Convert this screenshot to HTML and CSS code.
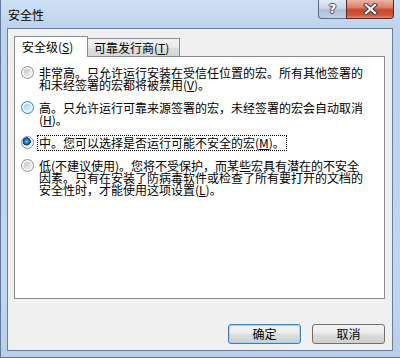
FILE: index.html
```html
<!DOCTYPE html>
<html lang="zh-CN">
<head>
<meta charset="utf-8">
<title>安全性</title>
<link rel="stylesheet" href="styles.css">
</head>
<body>
<div class="window">
  <div class="titlebar">
    <span class="title">安全性</span>
    <div class="caption-buttons">
      <div class="cbtn help">?</div>
      <div class="cbtn close">
        <svg width="15" height="12" viewBox="0 0 15 12">
          <path d="M3 2 L12 10 M12 2 L3 10" stroke="#3a3f4a" stroke-width="4.2" stroke-linecap="square" fill="none"/>
          <path d="M3 2 L12 10 M12 2 L3 10" stroke="#ffffff" stroke-width="2.2" stroke-linecap="square" fill="none"/>
        </svg>
      </div>
    </div>
  </div>
  <div class="client">
    <div class="tabs">
      <div class="tab active">安全级(<u>S</u>)</div>
      <div class="tab inactive">可靠发行商(<u>T</u>)</div>
    </div>
    <div class="panel">
      <div class="option">
        <span class="radio"></span>
        <span class="label">非常高。只允许运行安装在受信任位置的宏。所有其他签署的<br>和未经签署的宏都将被禁用(<u>V</u>)。</span>
      </div>
      <div class="option">
        <span class="radio hover"></span>
        <span class="label">高。只允许运行可靠来源签署的宏，未经签署的宏会自动取消<br>(<u>H</u>)。</span>
      </div>
      <div class="option">
        <span class="radio checked"></span>
        <span class="label focus">中。您可以选择是否运行可能不安全的宏(<u>M</u>)。</span>
      </div>
      <div class="option">
        <span class="radio"></span>
        <span class="label">低(不建议使用)。您将不受保护，而某些宏具有潜在的不安全<br>因素。只有在安装了防病毒软件或检查了所有要打开的文档的<br>安全性时，才能使用这项设置(<u>L</u>)。</span>
      </div>
    </div>
    <div class="buttons">
      <button class="btn default">确定</button>
      <button class="btn">取消</button>
    </div>
  </div>
</div>
</body>
</html>
```

FILE: styles.css
```css
* {
  box-sizing: border-box;
}

html,
body {
  margin: 0;
  padding: 0;
}

body {
  width: 400px;
  height: 358px;
  overflow: hidden;
  font-family: "Noto Sans CJK SC", "Noto Sans", sans-serif;
  font-size: 12px;
  color: #000;
}

.window {
  width: 400px;
  height: 358px;
  display: flex;
  flex-direction: column;
  padding: 0 7px 6px 6px;
  background: linear-gradient(to bottom, #cddff3 0px, #bed4ed 28px, #c0d5ee 300px, #b9cfe8 100%);
  border-left: 1px solid #64799a;
  border-bottom: 1px solid #64799a;
}

.titlebar {
  height: 28px;
  flex-shrink: 0;
  display: flex;
  align-items: flex-start;
}

.title {
  padding: 8px 0 0 1px;
  line-height: 14px;
}

.caption-buttons {
  margin-left: auto;
  margin-right: -1px;
  display: flex;
}

.cbtn {
  height: 19px;
  display: flex;
  align-items: center;
  justify-content: center;
}

.help {
  width: 28px;
  border: 1px solid #5a6b84;
  border-top: none;
  border-right: none;
  border-bottom-left-radius: 4px;
  background: linear-gradient(to bottom, #e2e9f2 0%, #c9d5e4 45%, #afbfd3 55%, #c0cfe1 100%);
  font-family: "DejaVu Sans", sans-serif;
  font-weight: bold;
  font-size: 13px;
  color: #fff;
  text-shadow: 1px 0 0 #3e4c62, -1px 0 0 #3e4c62, 0 1px 0 #3e4c62, 0 -1px 0 #3e4c62;
  line-height: 14px;
}

.close {
  width: 48px;
  border: 1px solid #5b2a24;
  border-top: none;
  border-bottom-right-radius: 4px;
  background: linear-gradient(to bottom, #eab3a3 0%, #dc826b 40%, #c7472c 55%, #d0583c 85%, #e0886c 100%);
}

.close svg {
  display: block;
}

.client {
  flex: 1;
  display: flex;
  flex-direction: column;
  border: 1px solid #6d7f98;
  background: #f0f0f0;
  padding: 0 7px 0 6px;
}

.tabs {
  display: flex;
  align-items: flex-end;
  height: 21px;
  margin: 7px 0 -1px 0;
  flex-shrink: 0;
}

.tab {
  border: 1px solid #898c95;
  border-bottom: none;
  line-height: 16px;
  white-space: nowrap;
}

.tab.active {
  width: 74px;
  height: 21px;
  padding: 2px 0 0 7px;
  background: #fff;
  position: relative;
  z-index: 1;
}

.tab.inactive {
  width: 93px;
  height: 18px;
  margin: 0 0 1px -1px;
  padding: 1px 0 0 6px;
  background: linear-gradient(to bottom, #f3f3f3 0%, #e9e9e9 50%, #dedede 51%, #d6d6d6 100%);
}

.panel {
  height: 243px;
  flex-shrink: 0;
  border: 1px solid #898c95;
  background: #fff;
  padding: 10px 0 0 6px;
  display: flex;
  flex-direction: column;
  gap: 11px;
}

.option {
  display: flex;
  align-items: flex-start;
  gap: 5px;
}

.radio {
  width: 13px;
  height: 13px;
  flex-shrink: 0;
  margin-top: -1px;
  border-radius: 50%;
  border: 1px solid #8f8f8f;
  background:
    radial-gradient(circle closest-side, transparent 0 68%, #f6f6f6 74%),
    linear-gradient(135deg, #bdbdbd 0%, #dcdcdc 50%, #fbfbfb 100%);
}

.radio.hover {
  border-color: #3c7fb1;
  background:
    radial-gradient(circle closest-side, transparent 0 68%, #e4f3fc 74%),
    linear-gradient(135deg, #9bcdec 0%, #c4e4f7 50%, #eef8fe 100%);
}

.radio.checked {
  border-color: #7f8ea0;
  background:
    radial-gradient(circle at 42% 40%, #9fe2ff 0, #2f93d8 1.4px, #0d4f95 3.2px, #0a3f7a 3.9px, transparent 4.3px),
    radial-gradient(circle closest-side, transparent 0 68%, #f6f6f6 74%),
    linear-gradient(135deg, #bdbdbd 0%, #dcdcdc 50%, #fbfbfb 100%);
}

.label {
  line-height: 12px;
  white-space: nowrap;
}

.label.focus {
  outline: 1px dotted #000;
  outline-offset: 1px;
}

.buttons {
  display: flex;
  justify-content: flex-end;
  gap: 11px;
  margin-top: 25px;
}

.btn {
  width: 73px;
  height: 20px;
  padding: 0;
  border: 1px solid #707070;
  border-radius: 3px;
  background: linear-gradient(to bottom, #f2f2f2 0%, #ebebeb 49%, #dddddd 50%, #cfcfcf 100%);
  font-family: "Noto Sans CJK SC", "Noto Sans", sans-serif;
  font-size: 12px;
  line-height: 18px;
  color: #000;
}

.btn.default {
  border-color: #3c7fb1;
  box-shadow: inset 0 0 0 1px #9fd8f5;
}
```
